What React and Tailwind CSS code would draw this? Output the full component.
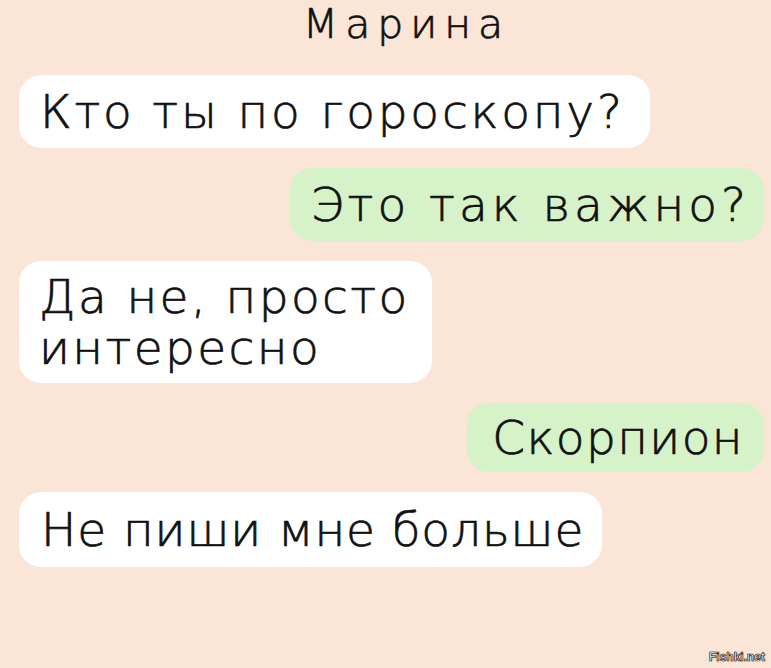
const bubbleText = 'text-[47px] leading-[51px] font-light';
const ink = { WebkitTextStroke: '0.7px #111111' };

export default function App() {
  return (
    <div
      className="relative h-[668px] w-[771px] overflow-hidden bg-[#fae5d7] text-[#111111]"
      style={{ fontFamily: '"DejaVu Sans", "Noto Sans", sans-serif' }}
    >
      <div className="flex flex-col pl-[19px] pr-[7px]">
        <div
          className="flex h-[75px] items-start justify-center pl-[30px] text-[41px] leading-[48px] font-light tracking-[7px]"
          style={ink}
        >
          Марина
        </div>
        <div className="flex flex-col gap-5" style={ink}>
          <div className={`self-start rounded-[22px] bg-white py-[11px] pl-[21px] pr-[25px] tracking-[2.8px] ${bubbleText}`}>
            Кто ты по гороскопу?
          </div>
          <div className={`self-end rounded-[22px] bg-[#d6f2c9] py-[11px] pl-[21px] pr-[14px] tracking-[4px] ${bubbleText}`}>
            Это так важно?
          </div>
          <div className={`self-start rounded-[22px] bg-white py-[10px] pl-[20px] pr-[22px] tracking-[2.4px] ${bubbleText}`}>
            <div>Да не, просто</div>
            <div>интересно</div>
          </div>
          <div className={`self-end rounded-[22px] bg-[#d6f2c9] py-[9px] pl-[25px] pr-[20px] tracking-[1.4px] ${bubbleText}`}>
            Скорпион
          </div>
          <div className={`self-start rounded-[22px] bg-white py-[12px] pl-[22px] pr-[18px] tracking-[0.9px] ${bubbleText}`}>
            Не пиши мне больше
          </div>
        </div>
      </div>
      <div
        className="absolute bottom-[4px] right-[6px] text-[12px] font-bold leading-[14px] text-white"
        style={{ fontFamily: '"Liberation Sans", Arial, sans-serif', WebkitTextStroke: '0.6px #222', textShadow: '0 0 1px #000' }}
      >
        Fishki.net
      </div>
    </div>
  );
}
